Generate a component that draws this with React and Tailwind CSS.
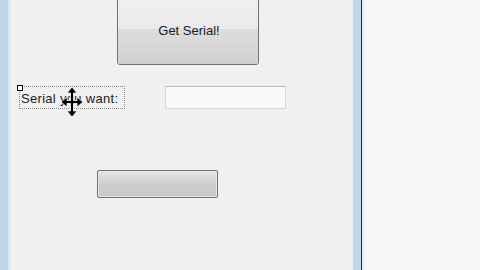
import React from 'react';

const MoveCursor = () => (
  <svg width="22" height="30" viewBox="0 0 22 30" className="absolute left-[41px] top-[0px]">
    <path d="M11 0 L16 6 L12.5 6 L12.5 13.5 L16 13.5 L16 10 L22 15 L16 20 L16 16.5 L12.5 16.5 L12.5 24 L16 24 L11 30 L6 24 L9.5 24 L9.5 16.5 L6 16.5 L6 20 L0 15 L6 10 L6 13.5 L9.5 13.5 L9.5 6 L6 6 Z" fill="#000" stroke="#fff" strokeWidth="0.8" />
  </svg>
);

export default function App() {
  return (
    <div className="flex h-[270px] w-[480px] overflow-hidden bg-[#f7f7f7] font-['Liberation_Sans',sans-serif]">
      {/* left window frame */}
      <div className="flex w-[13px]">
        <div className="w-[8px] bg-[#bed4e8]" />
        <div className="w-[3px] bg-[#dbe9f5]" />
        <div className="w-[2px] bg-[#f6f1ec]" />
      </div>

      {/* form surface */}
      <div className="flex w-[340px] flex-col bg-[#f0f0f0]">
        <div className="relative ml-[104px] mt-[-6px] flex h-[71px] w-[142px] flex-col overflow-hidden rounded-[3px] border border-[#707070] shadow-[inset_0_0_0_1px_#fafafa]">
          <div className="h-[34px] bg-gradient-to-b from-[#f2f2f2] to-[#eaeaea]" />
          <div className="flex-1 bg-gradient-to-b from-[#dedede] to-[#d0d0d0]" />
          <span className="absolute inset-x-0 top-[28px] pl-[2px] text-center text-[13px] leading-[15px] text-[#1a1a1a]">Get Serial!</span>
        </div>

        <div className="mt-[21px] flex items-center">
          <div className="relative ml-[6px] h-[23px] w-[106px] border border-dotted border-[#888]">
            <div className="absolute left-[-3px] top-[-2px] h-[6px] w-[6px] border border-black bg-white" />
            <span className="absolute left-[1px] top-[5px] text-[13px] leading-[14px] tracking-[0.3px] text-[#222]">Serial you want:</span>
            <MoveCursor />
          </div>
          <div className="ml-[40px] h-[23px] w-[121px] border border-[#d6d6d6] border-t-[#bdbdbd] bg-[#fafafa]" />
        </div>

        <div className="ml-[84px] mt-[61px] h-[28px] w-[121px] rounded-[2px] border border-[#707070] bg-gradient-to-b from-[#e6e6e6] via-[#cdcdcd] to-[#c8c8c8] shadow-[inset_0_0_0_1px_#e8e8e8]" />
      </div>

      {/* right window frame */}
      <div className="flex w-[11px]">
        <div className="w-[8px] bg-[#c0d6ea]" />
        <div className="w-[1px] bg-[#1d3448]" />
        <div className="w-[2px] bg-[#d9ecf8]" />
      </div>

      <div className="flex-1 bg-[#f7f7f7]" />
    </div>
  );
}
